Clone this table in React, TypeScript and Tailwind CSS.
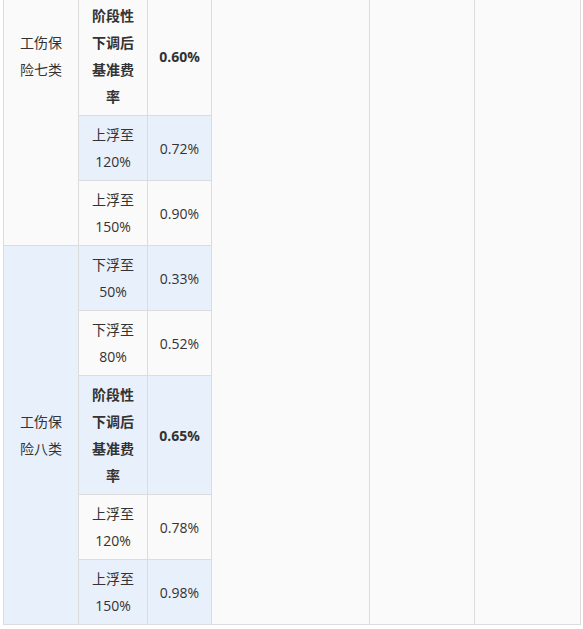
import React from 'react'

interface RateRow {
    label: string[]
    rate: string
    bold?: boolean
}

interface RateGroup {
    name: string[]
    rows: RateRow[]
}

const groups: RateGroup[] = [
    {
        name: ['工伤保', '险七类'],
        rows: [
            { label: ['下浮至', '50%'], rate: '0.30%' },
            { label: ['下浮至', '80%'], rate: '0.48%' },
            { label: ['阶段性', '下调后', '基准费', '率'], rate: '0.60%', bold: true },
            { label: ['上浮至', '120%'], rate: '0.72%' },
            { label: ['上浮至', '150%'], rate: '0.90%' },
        ],
    },
    {
        name: ['工伤保', '险八类'],
        rows: [
            { label: ['下浮至', '50%'], rate: '0.33%' },
            { label: ['下浮至', '80%'], rate: '0.52%' },
            { label: ['阶段性', '下调后', '基准费', '率'], rate: '0.65%', bold: true },
            { label: ['上浮至', '120%'], rate: '0.78%' },
            { label: ['上浮至', '150%'], rate: '0.98%' },
        ],
    },
]

const cell = 'border border-[#dcdcdc] px-[10px] py-[5px] text-center align-middle'

const App = () => {
    const totalRows = groups.reduce((n, g) => n + g.rows.length, 0)
    let rowIndex = 0

    return (
        <div className="h-[629px] overflow-hidden bg-white">
            <table
                className="ml-[3px] mt-[-134px] w-[578px] table-fixed border-collapse text-[14px] leading-[27px] text-[#333]"
                style={{ fontFamily: '"Open Sans", "Noto Sans CJK SC", sans-serif' }}
            >
                <colgroup>
                    <col className="w-[75px]" />
                    <col className="w-[69px]" />
                    <col className="w-[64px]" />
                    <col className="w-[158px]" />
                    <col className="w-[105px]" />
                    <col className="w-[106px]" />
                </colgroup>
                <tbody>
                    {groups.map((group) =>
                        group.rows.map((row, i) => {
                            const striped = rowIndex % 2 === 1
                            const first = rowIndex === 0
                            rowIndex++
                            return (
                                <tr key={group.name.join('') + i} className={striped ? 'bg-[#e8f0fc]' : 'bg-[#fafafa]'}>
                                    {i === 0 && (
                                        <td rowSpan={group.rows.length} className={cell}>
                                            {group.name.map((line) => (
                                                <div key={line}>{line}</div>
                                            ))}
                                        </td>
                                    )}
                                    <td className={`${cell} ${row.bold ? 'font-bold' : ''}`}>
                                        {row.label.map((line) => (
                                            <div key={line}>{line}</div>
                                        ))}
                                    </td>
                                    <td className={`${cell} ${row.bold ? 'font-bold' : ''}`}>{row.rate}</td>
                                    {first && (
                                        <>
                                            <td rowSpan={totalRows} className={`${cell} bg-[#fafafa]`}></td>
                                            <td rowSpan={totalRows} className={`${cell} bg-[#fafafa]`}></td>
                                            <td rowSpan={totalRows} className={`${cell} bg-[#fafafa]`}></td>
                                        </>
                                    )}
                                </tr>
                            )
                        })
                    )}
                </tbody>
            </table>
        </div>
    )
}

export default App
